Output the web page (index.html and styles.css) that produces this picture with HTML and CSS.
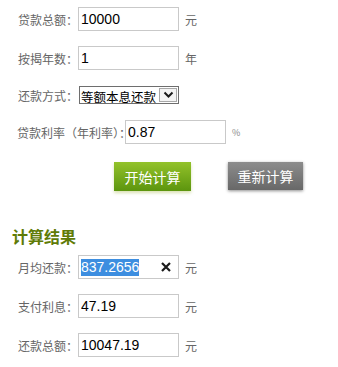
FILE: index.html
```
<!DOCTYPE html>
<html lang="zh-CN">
<head>
<meta charset="utf-8">
<title>贷款计算器</title>
<link rel="stylesheet" href="styles.css">
</head>
<body>
<div class="calc">
  <div class="row">
    <label class="lbl">贷款总额：</label>
    <input class="field" type="text" value="10000">
    <span class="unit">元</span>
  </div>
  <div class="row">
    <label class="lbl">按揭年数：</label>
    <input class="field" type="text" value="1">
    <span class="unit">年</span>
  </div>
  <div class="row row-sel">
    <label class="lbl">还款方式：</label>
    <div class="select">
      <select class="sel"><option>等额本息还款</option><option>等额本金还款</option></select>
      <span class="arrow"><svg width="11" height="8" viewBox="0 0 11 8"><path d="M1.5 1.5 L5.5 5.5 L9.5 1.5" fill="none" stroke="#1a1a1a" stroke-width="2"/></svg></span>
    </div>
  </div>
  <div class="row">
    <label class="lbl lbl-wide">贷款利率（年利率）：</label>
    <input class="field" type="text" value="0.87">
    <span class="unit pct">%</span>
  </div>
  <div class="buttons">
    <button class="btn btn-go">开始计算</button>
    <button class="btn btn-reset">重新计算</button>
  </div>

  <h2 class="title">计算结果</h2>
  <div class="row">
    <label class="lbl">月均还款：</label>
    <div class="field faux"><span class="hl">837.2656</span><span class="clear"><svg width="10" height="10" viewBox="0 0 10 10"><path d="M1 1 L9 9 M9 1 L1 9" stroke="#1a1a1a" stroke-width="2.2"/></svg></span></div>
    <span class="unit">元</span>
  </div>
  <div class="row">
    <label class="lbl">支付利息：</label>
    <input class="field" type="text" value="47.19">
    <span class="unit">元</span>
  </div>
  <div class="row">
    <label class="lbl">还款总额：</label>
    <input class="field" type="text" value="10047.19">
    <span class="unit">元</span>
  </div>
</div>
</body>
</html>
```
FILE: styles.css
```
html, body {
  margin: 0;
  padding: 0;
  background: #fff;
}
.calc {
  padding-top: 7px;
  font-family: "Noto Sans CJK SC", "Liberation Sans", sans-serif;
}
.row {
  display: flex;
  align-items: center;
  height: 24px;
  margin-bottom: 15px;
  padding-left: 18px;
}
.row-sel {
  height: 20px;
}
.lbl {
  width: 60px;
  font-size: 12px;
  color: #666;
  white-space: nowrap;
}
.lbl-wide {
  width: 108px;
  margin-left: -1px;
}
.field {
  box-sizing: border-box;
  width: 101px;
  height: 24px;
  border: 1px solid #c9c9c9;
  padding: 0 0 0 2px;
  margin: 0;
  font-family: "Liberation Sans", Arial, sans-serif;
  font-size: 14px;
  color: #000;
  background: #fff;
  outline: none;
}
.unit {
  margin-left: 6px;
  font-size: 12px;
  color: #666;
}
.pct {
  font-size: 9px;
  color: #888;
}
.select {
  display: flex;
  align-items: stretch;
  box-sizing: border-box;
  height: 18px;
  margin-left: 1px;
  border: 1px solid #6e6e6e;
  background: #fff;
}
.sel {
  appearance: none;
  -webkit-appearance: none;
  border: none;
  outline: none;
  background: #fff;
  padding: 0 1px 0 1px;
  margin: 0;
  font-family: "Noto Sans CJK SC", sans-serif;
  font-size: 12.5px;
  color: #000;
  width: 78px;
}
.arrow {
  display: flex;
  align-items: center;
  justify-content: center;
  width: 16px;
  margin: 1px;
  border: 1px solid #a8a8a8;
  background: #f4f4f4;
}
.buttons {
  display: flex;
  align-items: flex-start;
  padding-left: 114px;
  margin-top: 18px;
}
.btn {
  border: none;
  padding: 0;
  margin: 0;
  color: #fff;
  font-family: "Noto Sans CJK SC", sans-serif;
  font-size: 14px;
  cursor: pointer;
}
.btn-go {
  width: 77px;
  height: 29px;
  background: linear-gradient(#93c22a, #5c950e);
  box-shadow: 0 2px 3px rgba(150, 170, 40, 0.35);
}
.btn-reset {
  width: 75px;
  height: 28px;
  margin-left: 37px;
  background: linear-gradient(#8c8c8c, #686868);
  box-shadow: 0 1px 3px rgba(0, 0, 0, 0.45);
}
.title {
  margin: 35px 0 9px 12px;
  font-size: 16px;
  line-height: 20px;
  font-weight: bold;
  color: #5f7b06;
}
.faux {
  display: flex;
  align-items: center;
  justify-content: space-between;
  padding-right: 7px;
}
.hl {
  background: #3d8ee0;
  color: #fff;
  line-height: 17px;
}
.clear {
  display: flex;
}
```
